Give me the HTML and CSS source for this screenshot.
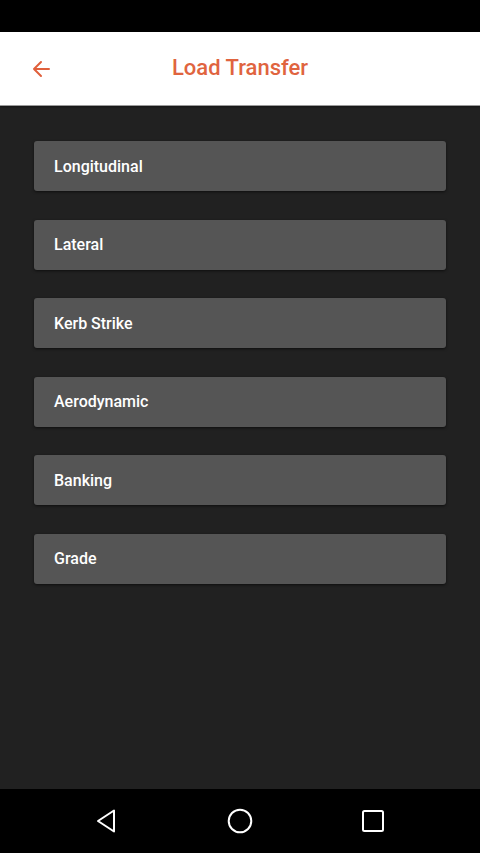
FILE: index.html
```html
<!DOCTYPE html>
<html lang="en">

<head>
   <meta charset="UTF-8">
   <meta name="viewport" content="width=device-width, initial-scale=1.0">
   <title>Load Transfer</title>
   <link rel="stylesheet" href="styles.css">
</head>

<body>
   <div class="status-bar"></div>

   <header class="top-bar">
      <button class="back" aria-label="Back">
         <svg width="18" height="18" viewBox="0 0 18 18">
            <path d="M17 9H2M9 2L2 9l7 7" fill="none" stroke="#e0603c" stroke-width="2" stroke-linecap="round" stroke-linejoin="round"/>
         </svg>
      </button>
      <h1>Load Transfer</h1>
   </header>

   <main class="content">
      <button class="item">Longitudinal</button>
      <button class="item">Lateral</button>
      <button class="item">Kerb Strike</button>
      <button class="item">Aerodynamic</button>
      <button class="item">Banking</button>
      <button class="item">Grade</button>
   </main>

   <nav class="nav-bar">
      <svg width="24" height="26" viewBox="0 0 24 26">
         <path d="M19 2.5v21L3 13z" fill="none" stroke="#fff" stroke-width="2" stroke-linejoin="round"/>
      </svg>
      <svg width="26" height="26" viewBox="0 0 26 26">
         <circle cx="13" cy="13" r="11.3" fill="none" stroke="#fff" stroke-width="2"/>
      </svg>
      <svg width="24" height="24" viewBox="0 0 24 24">
         <rect x="2" y="2" width="20" height="20" rx="1.5" fill="none" stroke="#fff" stroke-width="2"/>
      </svg>
   </nav>
</body>

</html>
```

FILE: styles.css
```css
html,
body {
   height: 100%;
   margin: 0;
   font-family: Roboto, 'Noto Sans', Arial, sans-serif;
}

body {
   display: flex;
   flex-direction: column;
   background-color: #212121;
}

.status-bar {
   height: 32px;
   background-color: #000;
}

.top-bar {
   position: relative;
   height: 74px;
   background-color: #fff;
   border-bottom: 1px solid #9a9a9a;
   box-sizing: border-box;
   display: flex;
   align-items: center;
   justify-content: center;
   box-shadow: 0 1px 2px rgba(0, 0, 0, 0.4);
}

.top-bar h1 {
   margin: 0;
   margin-top: -2px;
   font-size: 22px;
   font-weight: 500;
   color: #e0643f;
}

.back {
   position: absolute;
   left: 32px;
   top: 28px;
   padding: 0;
   border: 0;
   background: none;
   line-height: 0;
}

.content {
   flex: 1;
   display: flex;
   flex-direction: column;
   gap: 28.6px;
   padding: 35px 34px 0 34px;
}

.item {
   height: 50px;
   padding: 0 20px;
   border: 0;
   border-radius: 3px;
   background-color: #555;
   box-shadow: 0 1px 3px rgba(0, 0, 0, 0.6);
   color: #fff;
   font-family: Roboto, 'Noto Sans', Arial, sans-serif;
   font-size: 16px;
   font-weight: 500;
   text-align: left;
}

.nav-bar {
   height: 64px;
   background-color: #000;
   display: flex;
   align-items: center;
   justify-content: space-between;
   padding: 0 95px 0 95px;
}
```
